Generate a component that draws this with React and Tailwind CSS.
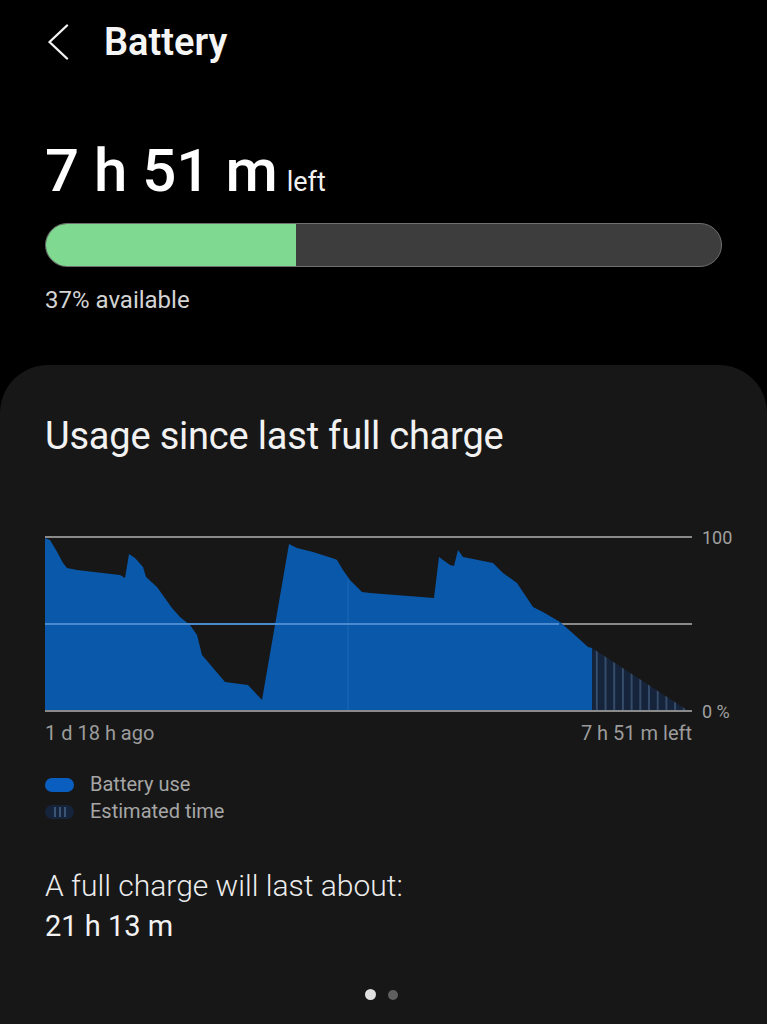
import React from 'react'

// chart coords: x = page x - 45, y = page y - 536
const usagePoints = [
  [0, 2], [5, 4], [11, 14], [18, 27], [22, 32], [32, 34], [75, 39], [80, 42],
  [84, 18], [90, 22], [98, 31], [101, 41], [112, 51], [127, 72], [135, 81],
  [145, 89], [152, 99], [157, 119], [163, 126], [180, 146], [203, 149],
  [217, 164], [244, 8], [252, 12], [268, 16], [290, 23], [292, 24], [298, 34],
  [305, 44], [317, 56], [325, 57], [389, 62], [394, 21], [405, 29], [409, 30],
  [413, 14], [418, 21], [448, 27], [458, 37], [472, 47], [488, 71], [498, 76],
  [515, 86], [532, 101], [543, 111], [547, 112], [547, 175], [0, 175],
]

function UsageChart() {
  const pts = usagePoints.map(([x, y]) => `${x},${y}`).join(' ')
  return (
    <svg width="647" height="176" viewBox="0 0 647 176" className="block shrink-0">
      <defs>
        <pattern id="est" width="8.7" height="176" patternUnits="userSpaceOnUse" x="547">
          <rect width="8.7" height="176" fill="#15243a" />
          <rect x="4" width="1.6" height="176" fill="#3b5474" />
        </pattern>
      </defs>
      <line x1="0" y1="1" x2="647" y2="1" stroke="#8a8a8a" strokeWidth="2" />
      <line x1="0" y1="88" x2="647" y2="88" stroke="#8a8a8a" strokeWidth="2" />
      <polygon points={pts} fill="#0a58aa" />
      <polygon points="547,112 642,174 547,174" fill="url(#est)" />
      {/* faint lines seen through the blue area */}
      <line x1="303" y1="44" x2="303" y2="174" stroke="#1f68b6" strokeWidth="1" />
      <line x1="0" y1="88" x2="514" y2="88" stroke="#4a8bd0" strokeWidth="2" />
      <line x1="0" y1="175" x2="647" y2="175" stroke="#8a8a8a" strokeWidth="2" />
    </svg>
  )
}

export default function App() {
  return (
    <div className="h-[1024px] bg-black text-white font-['Roboto','Liberation_Sans',sans-serif] flex flex-col overflow-hidden">
      {/* header */}
      <div className="h-[84px] flex items-center pl-[47px] shrink-0">
        <svg width="22" height="36" viewBox="0 0 22 36" fill="none">
          <path d="M20 1.5 L2.5 18 L20 34.5" stroke="#f2f2f2" strokeWidth="2.4" strokeLinecap="round" strokeLinejoin="round" />
        </svg>
        <h1 className="ml-[35px] text-[38px] leading-[38px] font-semibold text-[#f5f5f5]">Battery</h1>
      </div>

      {/* remaining time */}
      <div className="px-[45px] shrink-0">
        <div className="mt-[57px] h-[60px] flex items-baseline">
          <span className="text-[60px] leading-[60px] font-medium text-white">7 h 51 m</span>
          <span className="ml-[9px] text-[27px] leading-none text-[#f0f0f0]">left</span>
        </div>
        <div className="mt-[22px] h-[44px] rounded-full bg-[#3d3d3d] border border-[#6f6f6f] overflow-hidden flex">
          <div className="w-[37%] h-full bg-[#80d990]" />
        </div>
        <p className="mt-[22px] text-[24px] leading-[23px] text-[#d4d4d4]">37% available</p>
      </div>

      {/* usage card */}
      <div className="mt-[53px] flex-1 bg-[#171717] rounded-t-[48px] px-[45px] pt-[49px]">
        <h2 className="text-[38px] leading-[44px] text-[#f2f2f2] tracking-[-0.2px]">Usage since last full charge</h2>

        <div className="mt-[78px] flex">
          <UsageChart />
          <div className="ml-[10px] h-[176px] flex flex-col justify-between text-[18px] text-[#a0a0a0]">
            <div className="h-[2px] flex items-center"><span>100</span></div>
            <div className="h-[2px] flex items-center"><span>0 %</span></div>
          </div>
        </div>
        <div className="mt-[12px] w-[647px] flex justify-between text-[20px] leading-[19px] text-[#9c9c9c]">
          <span>1 d 18 h ago</span>
          <span>7 h 51 m left</span>
        </div>

        <div className="mt-[28px] text-[20px] leading-[27px] text-[#a6a6a6]">
          <div className="flex items-center">
            <span className="w-[29px] h-[14px] rounded-full bg-[#0a5ec0]" />
            <span className="ml-[16px]">Battery use</span>
          </div>
          <div className="flex items-center">
            <span className="w-[29px] h-[14px] rounded-full bg-[#15243a] flex items-center justify-center gap-[3px]">
              <i className="w-[2px] h-[10px] bg-[#3b5474]" />
              <i className="w-[2px] h-[10px] bg-[#3b5474]" />
              <i className="w-[2px] h-[10px] bg-[#3b5474]" />
            </span>
            <span className="ml-[16px]">Estimated time</span>
          </div>
        </div>

        <p className="mt-[41px] text-[30px] leading-[40px] font-light text-[#ececec]">A full charge will last about:</p>
        <p className="text-[29px] leading-[40px] text-[#f2f2f2]">21 h 13 m</p>

        <div className="mt-[43px] flex justify-center items-center gap-[12px] pr-[4px]">
          <span className="w-[11px] h-[11px] rounded-full bg-[#e0e0e0]" />
          <span className="w-[10px] h-[10px] rounded-full bg-[#5f5f5f]" />
        </div>
      </div>
    </div>
  )
}
